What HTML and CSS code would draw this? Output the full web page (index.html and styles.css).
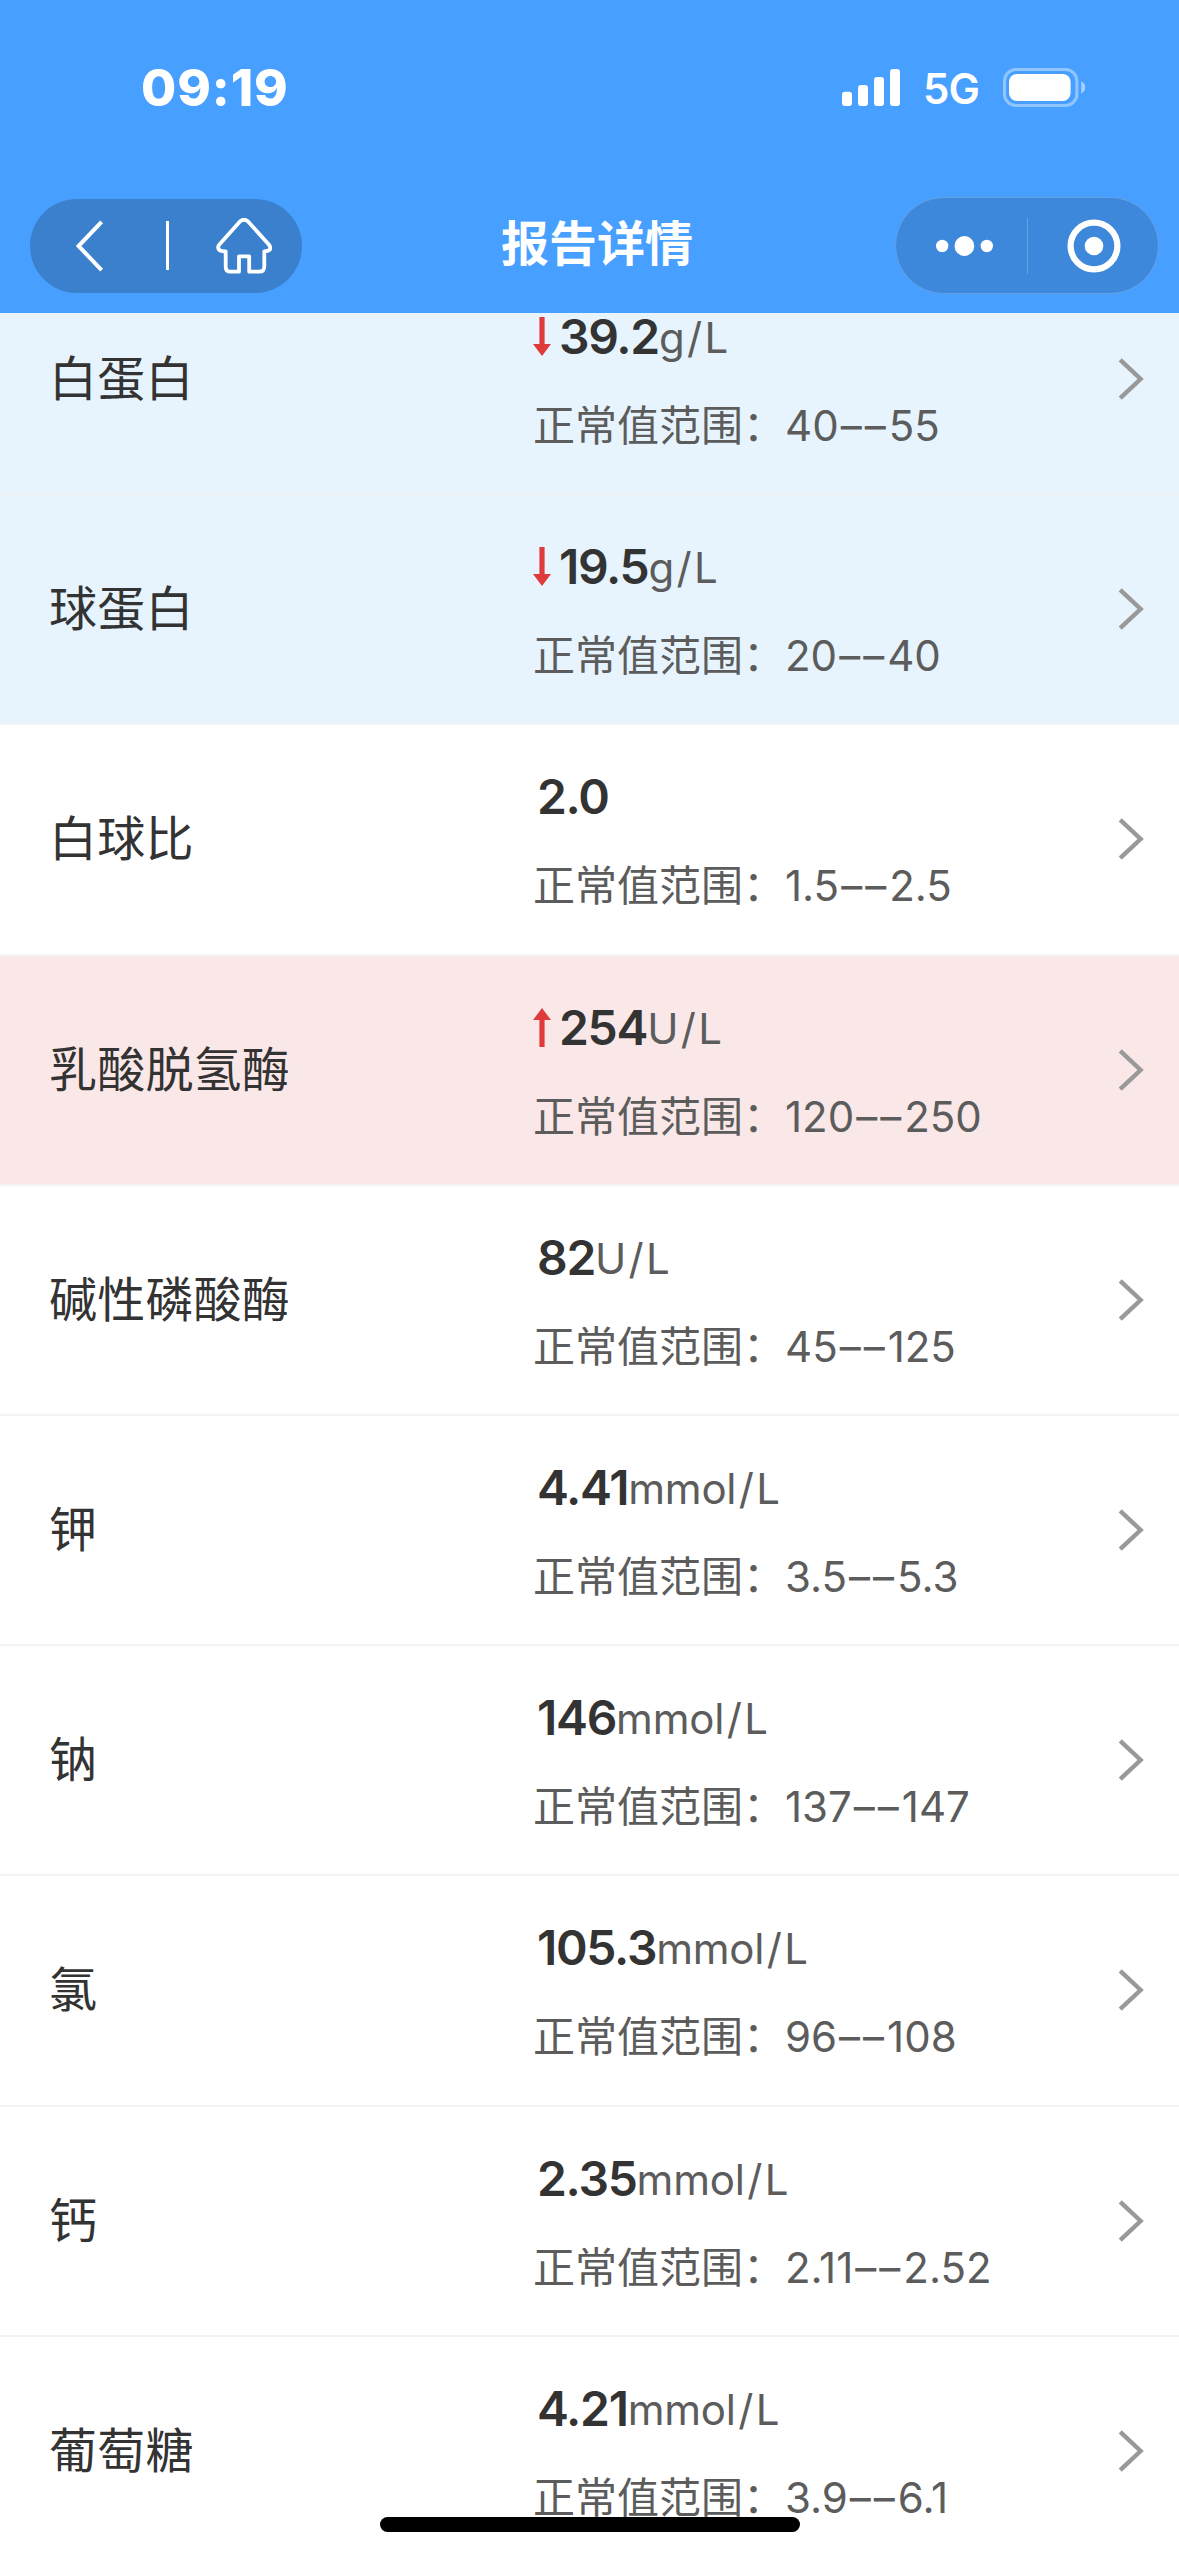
FILE: index.html
```
<!DOCTYPE html>
<html lang="zh-CN">
<head>
<meta charset="utf-8">
<title>报告详情</title>
<link rel="stylesheet" href="styles.css">
</head>
<body>
<svg class="sprite" aria-hidden="true">
  <symbol id="chevron" viewBox="0 0 26 42"><path d="M2.2 1.8 22.6 21 2.2 40.2" fill="none" stroke="#999" stroke-width="4.4"/></symbol>
  <symbol id="arrow-down" viewBox="0 0 18 39"><path d="M6.4 0h5.2v27H18L9 39 0 27h6.4z" fill="#e03b3b"/></symbol>
  <symbol id="arrow-up" viewBox="0 0 18 39"><path d="M6.4 39h5.2V12H18L9 0 0 12h6.4z" fill="#e03b3b"/></symbol>
</svg>
<div class="screen">
  <header class="header">
    <div class="status">
      <span class="time">09:19</span>
      <div class="indicators">
        <svg class="signal" width="58" height="37" viewBox="0 0 58 37" fill="#fff"><rect x="0" y="22.7" width="10" height="14.3" rx="3"/><rect x="16" y="16" width="10" height="21" rx="3"/><rect x="32" y="8" width="10" height="29" rx="3"/><rect x="48" y="0" width="10" height="37" rx="3"/></svg>
        <span class="network">5G</span>
        <svg class="battery" width="83" height="39" viewBox="0 0 83 39"><rect x="1.5" y="1.5" width="72.4" height="36" rx="11.5" fill="none" stroke="#fff" stroke-opacity=".4" stroke-width="3"/><rect x="6" y="6" width="61.6" height="27" rx="8" fill="#fff"/><path d="M78.2 13.3c5.4 2.4 5.4 10 0 12.4z" fill="#fff" fill-opacity=".5"/></svg>
      </div>
    </div>
    <div class="nav">
      <div class="pill pill-left">
        <svg class="back" width="28" height="52" viewBox="0 0 28 52"><path d="M25.6 1.8 2.6 26 25.6 50.2" fill="none" stroke="#fff" stroke-width="4"/></svg>
        <span class="rule"></span>
        <svg class="home" width="56" height="56" viewBox="0 0 56 56"><path d="M24.2 3.2Q28 .2 31.8 3.2L52.6 26.2Q55.3 29.6 53.7 31.7Q52.6 33.3 48.3 33.3V48.2Q48.3 53.7 43.3 53.7H33.2V38.3H23V53.7H14.6Q9.7 53.7 9.7 48.7V33.3Q5 33.3 3 31.7Q1 29 3.6 26.2Z" fill="none" stroke="#fff" stroke-width="3.8" stroke-linejoin="round"/></svg>
      </div>
      <h1 class="title">报告详情</h1>
      <div class="pill pill-right">
        <svg class="more" width="52" height="22" viewBox="0 0 52 22" fill="#fff"><circle cx="6.2" cy="11" r="6.2"/><circle cx="28.4" cy="11" r="9.9"/><circle cx="50.8" cy="11" r="6.2"/></svg>
        <span class="split"></span>
        <svg class="target" width="54" height="54" viewBox="0 0 54 54"><circle cx="27" cy="27" r="23.4" fill="none" stroke="#fff" stroke-width="6.2"/><circle cx="27" cy="27" r="9.3" fill="#fff"/></svg>
      </div>
    </div>
  </header>
  <main class="viewport">
    <ul class="list">
      <li class="row low"><span class="name">白蛋白</span><div class="result"><p class="value"><svg class="arrow"><use href="#arrow-down"/></svg><b>39.2</b><span>g<i>/</i>L</span></p><p class="range">正常值范围：40<i>––</i>55</p></div><svg class="chevron"><use href="#chevron"/></svg></li>
      <li class="row low"><span class="name">球蛋白</span><div class="result"><p class="value"><svg class="arrow"><use href="#arrow-down"/></svg><b>19.5</b><span>g<i>/</i>L</span></p><p class="range">正常值范围：20<i>––</i>40</p></div><svg class="chevron"><use href="#chevron"/></svg></li>
      <li class="row"><span class="name">白球比</span><div class="result"><p class="value"><b>2.0</b></p><p class="range">正常值范围：1.5<i>––</i>2.5</p></div><svg class="chevron"><use href="#chevron"/></svg></li>
      <li class="row high"><span class="name">乳酸脱氢酶</span><div class="result"><p class="value"><svg class="arrow"><use href="#arrow-up"/></svg><b>254</b><span>U<i>/</i>L</span></p><p class="range">正常值范围：120<i>––</i>250</p></div><svg class="chevron"><use href="#chevron"/></svg></li>
      <li class="row"><span class="name">碱性磷酸酶</span><div class="result"><p class="value"><b>82</b><span>U<i>/</i>L</span></p><p class="range">正常值范围：45<i>––</i>125</p></div><svg class="chevron"><use href="#chevron"/></svg></li>
      <li class="row"><span class="name">钾</span><div class="result"><p class="value"><b>4.41</b><span>mmol<i>/</i>L</span></p><p class="range">正常值范围：3.5<i>––</i>5.3</p></div><svg class="chevron"><use href="#chevron"/></svg></li>
      <li class="row"><span class="name">钠</span><div class="result"><p class="value"><b>146</b><span>mmol<i>/</i>L</span></p><p class="range">正常值范围：137<i>––</i>147</p></div><svg class="chevron"><use href="#chevron"/></svg></li>
      <li class="row"><span class="name">氯</span><div class="result"><p class="value"><b>105.3</b><span>mmol<i>/</i>L</span></p><p class="range">正常值范围：96<i>––</i>108</p></div><svg class="chevron"><use href="#chevron"/></svg></li>
      <li class="row"><span class="name">钙</span><div class="result"><p class="value"><b>2.35</b><span>mmol<i>/</i>L</span></p><p class="range">正常值范围：2.11<i>––</i>2.52</p></div><svg class="chevron"><use href="#chevron"/></svg></li>
      <li class="row"><span class="name">葡萄糖</span><div class="result"><p class="value"><b>4.21</b><span>mmol<i>/</i>L</span></p><p class="range">正常值范围：3.9<i>––</i>6.1</p></div><svg class="chevron"><use href="#chevron"/></svg></li>
    </ul>
  </main>
  <div class="home-indicator"></div>
</div>
</body>
</html>
```
FILE: styles.css
```
* {
  box-sizing: border-box;
  margin: 0;
  padding: 0;
}

body {
  background: #fff;
  color: #333;
  font-family: Inter, "Noto Sans CJK SC", sans-serif;
}

svg {
  display: block;
  flex: none;
}

i {
  font-style: normal;
}

.sprite {
  display: none;
}

.screen {
  position: relative;
  display: flex;
  flex-direction: column;
  width: 1179px;
  height: 2556px;
  overflow: hidden;
}

/* Header: system status and navigation */
.header {
  flex: none;
  height: 313px;
  background: #479fff;
  color: #fff;
}

.status {
  display: flex;
  justify-content: space-between;
  height: 197px;
  padding: 57px 93px 0 141px;
}

.time {
  font-size: 51px;
  font-weight: 800;
  line-height: 62px;
  letter-spacing: 0.9px;
}

.indicators {
  display: flex;
  align-items: center;
  height: 61px;
}

.network {
  width: 56px;
  margin: 3px 24px 0 23px;
  font-size: 42px;
  font-weight: 600;
  line-height: 50px;
  letter-spacing: -1px;
}

.nav {
  display: grid;
  grid-template-columns: 1fr auto 1fr;
  align-items: center;
  height: 97px;
  padding: 0 20px 0 30px;
}

.pill {
  display: flex;
  align-items: center;
}

.pill-left {
  width: 272px;
  height: 94px;
  padding-left: 46px;
  border-radius: 47px;
  background: #3b80cc;
}

.rule {
  width: 3px;
  height: 49px;
  margin: 0 47px 0 62px;
  background: #fff;
}

.title {
  margin: 0 0 3px 5px;
  font-size: 48px;
  font-weight: 600;
  line-height: 60px;
}

.pill-right {
  justify-self: end;
  width: 264px;
  height: 97px;
  padding-left: 40px;
  border: 1px solid #64a1e5;
  border-radius: 49px;
  background: #3d88db;
}

.more {
  overflow: visible;
}

.split {
  width: 1px;
  height: 56px;
  margin: 0 39px 0 39px;
  background: #64a1e5;
}

/* Scrolled result list */
.viewport {
  flex: 1;
  min-height: 0;
  overflow: hidden;
}

.list {
  margin-top: -48px;
  list-style: none;
}

.row {
  display: grid;
  grid-template-columns: 484px 1fr auto;
  height: 230.2px;
  padding: 0 35px 0 49px;
  border-bottom: 2px solid #f2f3f4;
}

.low {
  background: #e7f4fe;
}

.high {
  background: #fae8e8;
}

.name {
  align-self: center;
  font-size: 48px;
  line-height: 60px;
  letter-spacing: 0.2px;
}

.result {
  padding-top: 43px;
  white-space: nowrap;
}

.value {
  display: flex;
  height: 58px;
  padding-left: 4px;
  line-height: 58px;
}

.arrow {
  width: 18px;
  height: 39px;
  margin: 9px 8px 0 -4px;
}

.value b {
  font-size: 48px;
  font-weight: 600;
  letter-spacing: -1.3px;
}

.value span {
  padding-top: 1px;
  color: #5c5c5c;
  font-size: 42px;
  font-weight: 400;
  font-kerning: none;
  letter-spacing: -0.2px;
}

.value i {
  padding: 0 2.5px;
}

.range {
  margin-top: 31px;
  color: #5c5c5c;
  font-size: 42px;
  line-height: 58px;
}

.range i {
  margin-left: 2px;
  letter-spacing: 3px;
}

.chevron {
  align-self: center;
  width: 26px;
  height: 42px;
}

.home-indicator {
  position: absolute;
  left: 380px;
  bottom: 24px;
  width: 420px;
  height: 15px;
  border-radius: 8px;
  background: #000;
}
```
